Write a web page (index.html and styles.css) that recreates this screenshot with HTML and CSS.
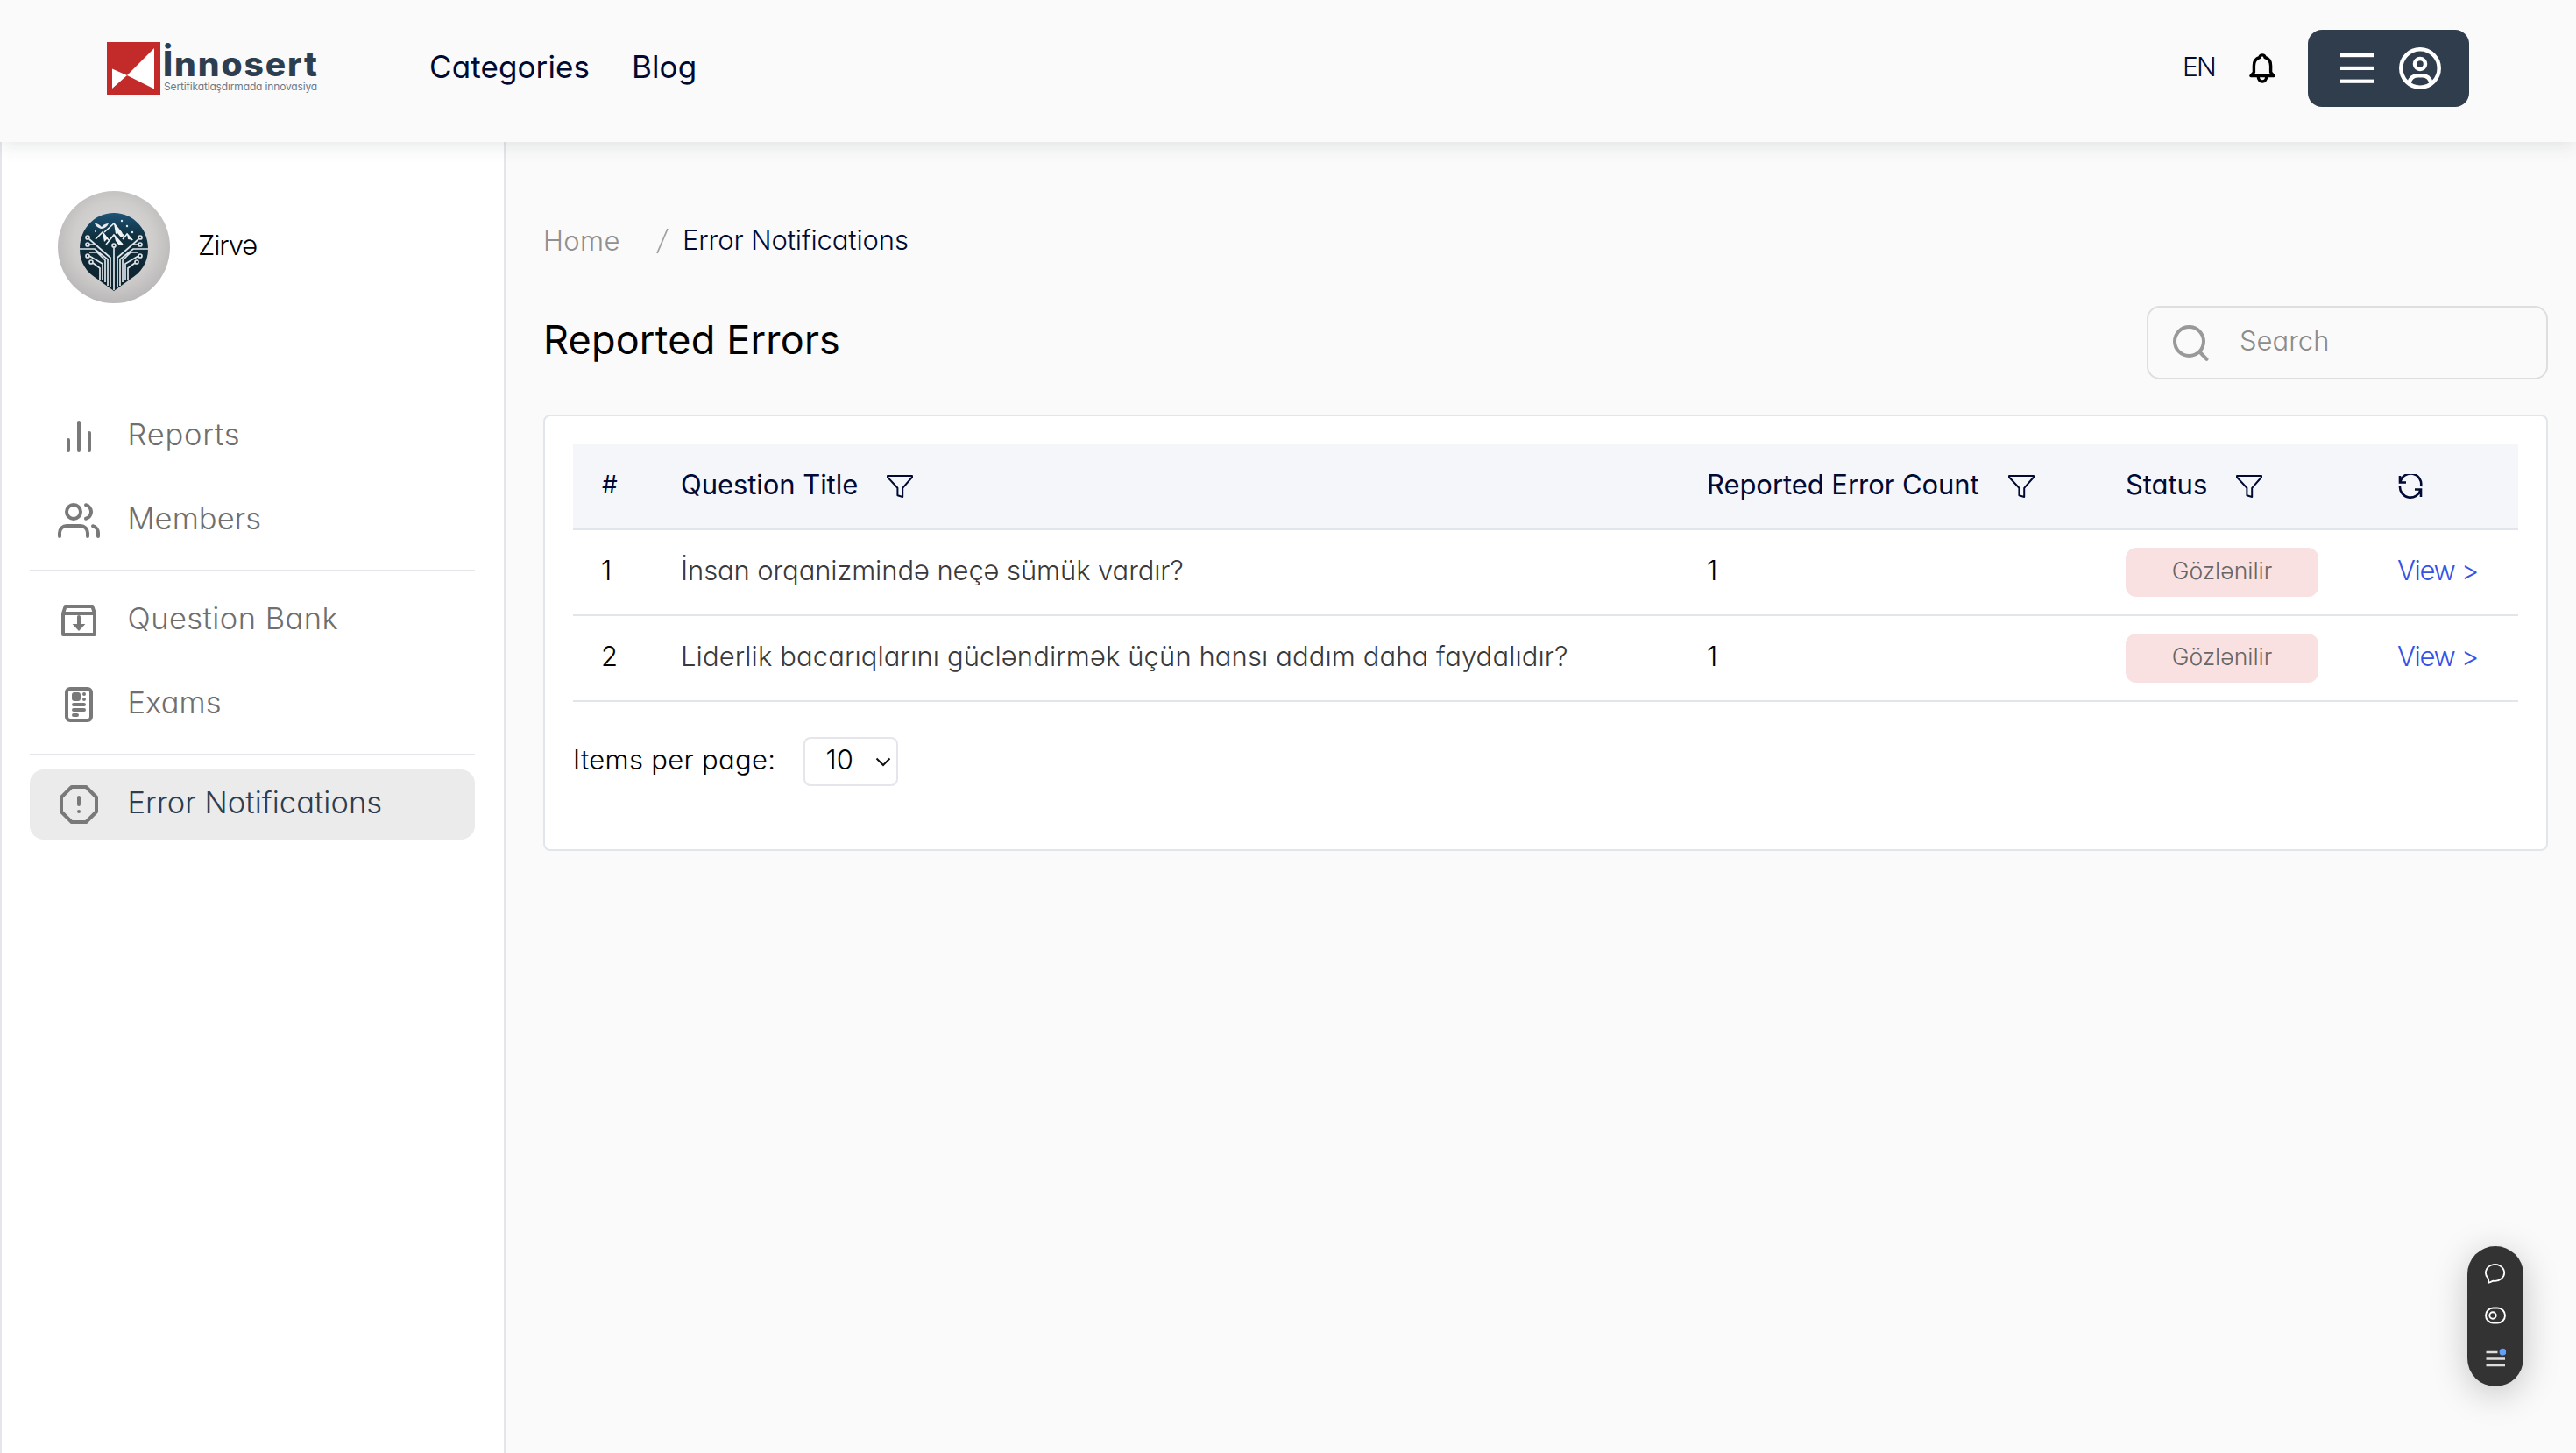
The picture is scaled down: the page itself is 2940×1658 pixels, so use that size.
FILE: index.html
```html
<!DOCTYPE html>
<html lang="en">
<head>
<meta charset="utf-8">
<title>Error Notifications</title>
<link rel="stylesheet" href="styles.css">
</head>
<body>
<svg class="sprite" aria-hidden="true">
  <symbol id="funnel" viewBox="0 0 30 26">
    <path d="M1 1H29V2.5L18.2 14.8V25L12.4 23.3V14.8L1 2.5Z" fill="none" stroke="currentColor" stroke-width="2" stroke-linejoin="round"/>
  </symbol>
</svg>

<header class="topbar">
  <a class="logo">
    <svg class="logo-mark" viewBox="0 0 61 60">
      <rect width="61" height="60" fill="#c32a2a"/>
      <path d="M6 30.5L23 38L54 7V53.500L23 38L6 53Z" fill="#fff"/>
    </svg>
    <span class="logo-text">
      <span class="logo-name">İnnosert</span>
      <span class="logo-tagline">Sertifikatlaşdırmada innovasiya</span>
    </span>
  </a>
  <nav class="topnav">
    <a>Categories</a>
    <a>Blog</a>
  </nav>
  <div class="tools">
    <span class="lang">EN</span>
    <svg class="bell" viewBox="0 0 30 34" fill="none" stroke="#000" stroke-width="3.4" stroke-linejoin="round">
      <path d="M1.900 25.500L5.400 21.500V14C5.400 8.500 8.500 5.500 12 4.500C12.500 1 17.500 1 18 4.500C21.500 5.500 24.600 8.500 24.600 14V21.500L28.100 25.500Z"/>
      <path d="M10.300 26.500C10.300 33.800 19.700 33.800 19.700 26.500"/>
    </svg>
    <button class="account">
      <svg class="burger" viewBox="0 0 38 34" fill="#fff">
        <rect width="38" height="4.200"/><rect y="14.800" width="38" height="4.200"/><rect y="29.600" width="38" height="4.200"/>
      </svg>
      <svg class="user" viewBox="0 0 48 48" fill="none" stroke="#fff" stroke-width="4.500">
        <circle cx="24" cy="24" r="21.700"/>
        <circle cx="24" cy="19" r="6"/>
        <path d="M11.500 40.500C13 34.500 17 32.200 21 32.200H27C31 32.200 35 34.500 36.500 40.500"/>
      </svg>
    </button>
  </div>
</header>

<div class="shell">
  <aside class="sidebar">
    <div class="profile">
      <svg class="avatar" viewBox="0 0 128 128">
        <defs>
          <radialGradient id="disc" cx=".5" cy=".45" r=".6"><stop offset="0" stop-color="#dcdcdc"/><stop offset=".6" stop-color="#cfcdcc"/><stop offset="1" stop-color="#b4b2b2"/></radialGradient>
          <linearGradient id="night" x2="0" y2="1"><stop offset="0" stop-color="#1d5478"/><stop offset=".3" stop-color="#10303f"/><stop offset="1" stop-color="#0d202b"/></linearGradient>
        </defs>
        <circle cx="64" cy="64" r="64" fill="url(#disc)"/>
        <path d="M64 25C86 25 103 43 103 66C103 82 95 93 82 101L64 114L46 101C33 93 25 82 25 66C25 43 42 25 64 25Z" fill="url(#night)"/>
        <path d="M43 55L51 47L58 56M53 47L64 37L73 48M55 61L64 50L74 61M74 55L79 49L85 56" fill="none" stroke="#eef2f4" stroke-width="1.600"/>
        <path d="M64 37L76 51L72 53L68 48L66 49ZM64 50L75 62H70L66 57ZM51 47L57 54L53 58L52 53ZM79 48L86 56L80 55Z" fill="#eef2f4"/>
        <path d="M42 37C46 37 48 39 50 41C52 38 55 37 58 37C56 41 53 43 49 43C46 42 43 40 42 37Z" fill="#e4eaee"/>
        <g fill="#dfe8ec"><circle cx="73" cy="34" r="1.200"/><circle cx="79" cy="40" r="1.200"/><circle cx="85" cy="47" r="1.200"/><circle cx="43" cy="46" r="1"/></g>
        <g fill="none" stroke="#dde3e7" stroke-width="1.700">
          <path d="M64 64V113M60 110V76L36 55M68 110V76L92 55M25 66H42L57 78V108M103 66H86L71 78V108M36 61H43M92 61H85M36 70H45L54 79V104M92 70H83L74 79V104M36 74L51 83V102M92 74L77 83V102M40 82L48 88V101M88 82L80 88V101"/>
          <circle cx="64" cy="62" r="2"/><circle cx="34" cy="53" r="2"/><circle cx="94" cy="53" r="2"/><circle cx="34" cy="61" r="2"/><circle cx="94" cy="61" r="2"/><circle cx="34" cy="74" r="2"/><circle cx="94" cy="74" r="2"/><circle cx="38" cy="81" r="2"/><circle cx="90" cy="81" r="2"/>
        </g>
      </svg>
      <span class="profile-name">Zirvə</span>
    </div>
    <nav class="menu">
      <a class="item">
        <svg viewBox="0 0 24 24"><path d="M18 20V10M12 20V4M6 20V14"/></svg>
        <span class="wide">Reports</span>
      </a>
      <a class="item">
        <svg viewBox="0 0 24 24"><path d="M17 21v-2a4 4 0 0 0-4-4H5a4 4 0 0 0-4 4v2M23 21v-2a4 4 0 0 0-3-3.870M16 3.130a4 4 0 0 1 0 7.750"/><circle cx="9" cy="7" r="4"/></svg>
        <span>Members</span>
      </a>
      <hr>
      <a class="item">
        <svg viewBox="0 0 24 24"><path d="M3 8V20H21V8L19.700 4H4.300ZM3 8H21M12 10V15"/><path class="solid" d="M8.300 14H15.700L12 18Z"/></svg>
        <span class="mid">Question Bank</span>
      </a>
      <a class="item">
        <svg viewBox="0 0 24 24"><rect x="5" y="3" width="14" height="18" rx="2"/><path d="M9 12H15M9 15H15M9 18H11"/><rect class="solid" x="8" y="5" width="5" height="5" rx="1.500"/><circle class="solid" cx="15" cy="6" r="1"/><circle class="solid" cx="15" cy="9" r="1"/></svg>
        <span>Exams</span>
      </a>
      <hr>
      <a class="item active">
        <svg viewBox="0 0 24 24"><path d="M7.860 2H16.140L22 7.860V16.140L16.140 22H7.860L2 16.140V7.860ZM12 8V12M12 16H12.010"/></svg>
        <span>Error Notifications</span>
      </a>
    </nav>
  </aside>

  <main class="content">
    <div class="crumbs">
      <a>Home</a>
      <svg class="slash" viewBox="0 0 14 30"><path d="M13 1L1 29" stroke="#a0a0a0" stroke-width="1.800"/></svg>
      <span class="current">Error Notifications</span>
    </div>
    <div class="heading">
      <h1>Reported Errors</h1>
      <div class="search">
        <svg viewBox="0 0 41 41" fill="none" stroke="#999" stroke-width="4"><circle cx="18.500" cy="18.500" r="16.500"/><path d="M30.500 30.500L38.500 38.800" stroke-linecap="round"/></svg>
        <span>Search</span>
      </div>
    </div>
    <section class="card">
      <table>
        <colgroup><col class="c-num"><col class="c-title"><col class="c-count"><col class="c-status"><col></colgroup>
        <thead>
          <tr>
            <th><div class="cell"><span class="hash">#</span></div></th>
            <th><div class="cell"><span>Question Title</span><svg class="funnel"><use href="#funnel"/></svg></div></th>
            <th><div class="cell"><span>Reported Error Count</span><svg class="funnel"><use href="#funnel"/></svg></div></th>
            <th><div class="cell"><span>Status</span><svg class="funnel"><use href="#funnel"/></svg></div></th>
            <th><div class="cell"><svg class="refresh" viewBox="0 0 28 28" fill="none" stroke="currentColor" stroke-width="2.600"><path d="M2 2V9.500H9M2.500 9A12 12 0 0 1 26 14M26 26V17.500H19M25.500 18A12 12 0 0 1 2 14"/></svg></div></th>
          </tr>
        </thead>
        <tbody>
          <tr>
            <td><div class="cell"><span class="num">1</span></div></td>
            <td><div class="cell"><span class="question">İnsan orqanizmində neçə sümük vardır?</span></div></td>
            <td><div class="cell"><span class="num">1</span></div></td>
            <td><div class="cell"><span class="badge">Gözlənilir</span></div></td>
            <td><div class="cell"><a class="view">View &gt;</a></div></td>
          </tr>
          <tr>
            <td><div class="cell"><span class="num">2</span></div></td>
            <td><div class="cell"><span class="question long">Liderlik bacarıqlarını gücləndirmək üçün hansı addım daha faydalıdır?</span></div></td>
            <td><div class="cell"><span class="num">1</span></div></td>
            <td><div class="cell"><span class="badge">Gözlənilir</span></div></td>
            <td><div class="cell"><a class="view">View &gt;</a></div></td>
          </tr>
        </tbody>
      </table>
      <div class="pager">
        <span class="pager-label">Items per page:</span>
        <div class="select">
          <span>10</span>
          <svg viewBox="0 0 18 11"><path d="M1.500 1.500L9 9L16.500 1.500" fill="none" stroke="#111" stroke-width="2"/></svg>
        </div>
      </div>
    </section>
  </main>
</div>

<div class="widget">
  <svg viewBox="0 0 24 24" fill="none" stroke="#fff" stroke-width="1.800"><path d="M3.500 17.500A10.600 9.400 0 1 1 9.500 20.600C7.500 21.600 5.500 22.600 3.800 22.800C4.300 21 4.500 19 3.500 17.500Z" stroke-linejoin="round"/></svg>
  <svg viewBox="0 0 24 24" fill="none" stroke="#fff" stroke-width="1.900"><rect x="1" y="3.500" width="22" height="17" rx="8.500"/><circle cx="9" cy="12" r="3.700"/></svg>
  <svg viewBox="0 0 24 24"><path d="M1.500 6H14.500M1.500 13.500H23M1.500 21H23" stroke="#ddd" stroke-width="2.600"/><circle cx="20.500" cy="5.700" r="3.900" fill="#60a0fa"/></svg>
</div>
</body>
</html>
```
FILE: styles.css
```css
* { box-sizing: border-box; }

body {
  margin: 0;
  height: 1658px;
  overflow: hidden;
  display: flex;
  flex-direction: column;
  background: #fafafa;
  font-family: Inter, "Noto Sans", sans-serif;
  font-feature-settings: "cv11";
  font-size: 31px;
  color: #000;
}

svg { display: block; flex: none; }
.sprite { display: none; }

/* Top bar */
.topbar {
  position: relative;
  z-index: 1;
  flex: none;
  display: flex;
  align-items: center;
  height: 162px;
  padding: 0 122px 6px;
  background: #fafafa;
  box-shadow: 0 4px 20px rgba(44, 62, 60, .12);
}
.logo { display: flex; align-items: center; gap: 3px; width: 368px; }
.logo-mark { width: 61px; height: 60px; }
.logo-text { display: flex; flex-direction: column; padding-top: 3px; white-space: nowrap; }
.logo-name {
  font-size: 39px;
  font-weight: 800;
  line-height: 39px;
  letter-spacing: 1.900px;
  color: #2c3e50;
}
.logo-tagline {
  padding-left: 1px;
  font-size: 12px;
  line-height: 14px;
  letter-spacing: -.150px;
  color: #6d7a87;
}
.topnav {
  display: flex;
  gap: 48px;
  padding-bottom: 5px;
  font-size: 35px;
  font-weight: 440;
  letter-spacing: .100px;
  color: #000a33;
}
.tools { display: flex; align-items: center; margin-left: auto; }
.lang { font-weight: 300; font-size: 30px; letter-spacing: -1.800px; color: #000a33; padding-bottom: 4px; margin-right: 39px; }
.bell { width: 30px; height: 34px; margin-right: 37px; }
.account {
  display: flex;
  align-items: center;
  gap: 29px;
  width: 184px;
  height: 88px;
  padding: 0 0 0 37px;
  border: 0;
  border-radius: 16px;
  background: #2f3d4d;
}
.burger { width: 38px; height: 34px; }
.user { width: 48px; height: 48px; }

.shell { flex: 1; display: flex; }

/* Sidebar */
.sidebar {
  width: 577px;
  padding: 56px 33px 0 32px;
  background: #fff;
  border: solid #e5e5eb;
  border-width: 0 2px;
}
.profile { display: flex; align-items: center; gap: 32px; padding-left: 32px; height: 128px; }
.avatar { width: 128px; height: 128px; }
.profile-name { letter-spacing: -1.100px; padding-bottom: 5px; font-weight: 350; }
.menu { display: flex; flex-direction: column; padding-top: 112px; }
.item {
  display: flex;
  align-items: center;
  gap: 31.500px;
  height: 80px;
  margin-bottom: 16px;
  padding-left: 32px;
  border-radius: 16px;
  font-size: 34.500px;
  font-weight: 300;
  letter-spacing: .06px;
  color: #6f6f6f;
}
.item svg {
  width: 48px;
  height: 48px;
  fill: none;
  stroke: #797979;
  stroke-width: 2;
  stroke-linecap: round;
  stroke-linejoin: round;
}
.item .solid { fill: #797979; stroke: none; }
.item span { padding-bottom: 6px; }
.item .wide { letter-spacing: .800px; }
.item .mid { letter-spacing: .450px; }
.item.active { background: #ebebeb; color: #2c3e50; }
.menu hr { width: 100%; height: 2px; margin: 0 0 16px; border: 0; background: #e5e5eb; }

/* Content */
.content { flex: 1; padding: 91px 32px 0 43px; }
.crumbs { display: flex; align-items: center; height: 44px; font-weight: 300; }
.crumbs a { color: #909090; letter-spacing: .400px; padding-bottom: 1px; }
.slash { width: 14px; height: 30px; margin: 0 16px 0 41px; }
.crumbs .current { color: #000a33; letter-spacing: -.12px; padding-bottom: 4px; }
.heading { display: flex; align-items: center; justify-content: space-between; padding-top: 52px; }
h1 { margin: 0; font-size: 45px; font-weight: 440; letter-spacing: .200px; line-height: 78px; padding-bottom: 6px; }
.search {
  display: flex;
  align-items: center;
  gap: 35px;
  width: 458px;
  height: 84px;
  padding-left: 28px;
  border: 2px solid #dedede;
  border-radius: 15px;
  font-weight: 300;
  color: #8c8c8c;
}
.search svg { width: 41px; height: 41px; }
.search span { padding-bottom: 5px; }

.card {
  height: 498px;
  margin-top: 40px;
  padding: 32px;
  background: #fff;
  border: 2px solid #e2e5eb;
  border-radius: 8px;
}
table { width: 100%; table-layout: fixed; border-collapse: separate; border-spacing: 0; }
.c-num { width: 91px; }
.c-title { width: 1171px; }
.c-count { width: 478px; }
.c-status { width: 310px; }
th, td {
  height: 98px;
  padding: 0 0 0 32px;
  text-align: left;
  border-bottom: 2px solid #e2e5eb;
}
th { background: #f5f6fa; font-weight: 440; color: #000a33; letter-spacing: -.06px; }
.cell { display: flex; align-items: center; height: 96px; white-space: nowrap; }
th span { padding-bottom: 5px; }
.hash { font-size: 28px; padding-left: 1px; }
.funnel { width: 30px; height: 26px; margin-left: 33px; }
.refresh { width: 28px; height: 28px; margin-left: 1px; }
.num { font-weight: 350; padding-bottom: 5px; }
.question { font-weight: 300; letter-spacing: -.11px; color: #3a3a3a; padding-bottom: 5px; }
.question.long { letter-spacing: .09px; }
.badge {
  width: 220px;
  height: 56px;
  line-height: 53px;
  border-radius: 12px;
  background: #f9e1e1;
  font-size: 26.500px;
  font-weight: 300;
  text-align: center;
  color: #666;
}
.view { font-weight: 300; letter-spacing: -1.300px; color: #3652e6; padding-bottom: 5px; }

.pager { display: flex; align-items: center; gap: 32px; margin-top: 40px; }
.pager-label { font-weight: 350; letter-spacing: .320px; padding-bottom: 5px; }
.select {
  display: flex;
  align-items: center;
  justify-content: space-between;
  width: 108px;
  height: 56px;
  padding: 0 6px 0 23px;
  border: 2px solid #e5e5eb;
  border-radius: 8px;
}
.select span { font-weight: 350; padding-bottom: 5px; }
.select svg { width: 18px; height: 11px; }

/* Floating feedback widget */
.widget {
  position: absolute;
  right: 60px;
  bottom: 76px;
  z-index: 2;
  display: flex;
  flex-direction: column;
  align-items: center;
  gap: 24px;
  width: 64px;
  height: 160px;
  padding-top: 19px;
  border-radius: 32px;
  background: #333;
  box-shadow: 0 8px 40px rgba(0, 0, 0, .22);
}
.widget svg { width: 24px; height: 24px; }
```
